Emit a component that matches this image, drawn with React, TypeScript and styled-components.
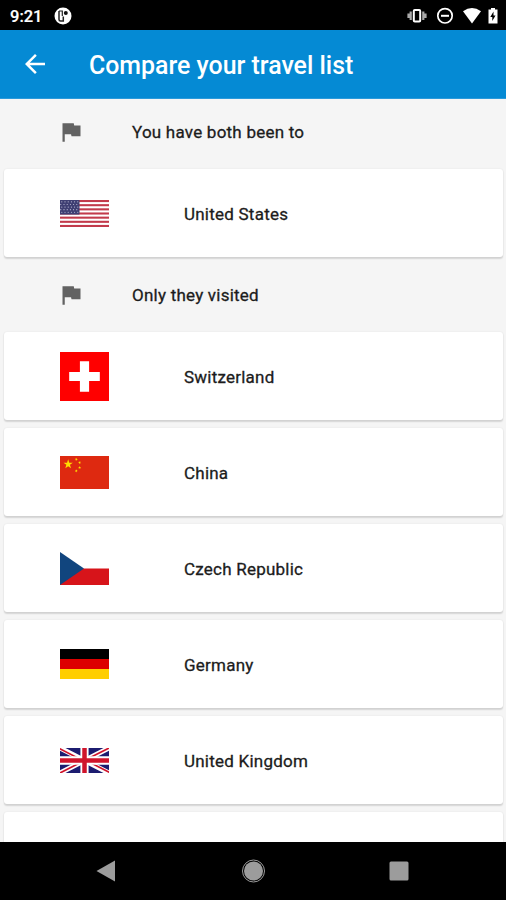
import React from "react";
import styled, { createGlobalStyle } from "styled-components";

const Global = createGlobalStyle`
  * { box-sizing: border-box; }
  body { margin: 0; background: #000; font-family: Roboto, sans-serif; }
`;

const Screen = styled.div`
  width: 506px;
  height: 900px;
  display: flex;
  flex-direction: column;
  overflow: hidden;
  background: #f5f5f5;
`;

const StatusBar = styled.header`
  flex: none;
  height: 30px;
  padding: 1px 5px 0 10px;
  display: flex;
  align-items: center;
  background: #000;
  color: #fff;
`;

const Clock = styled.span`
  width: 44px;
  padding-top: 1px;
  font-size: 16.5px;
  font-weight: 500;
  -webkit-text-stroke: 0.2px #fff;
`;

const StatusIcons = styled.div`
  margin-left: auto;
  display: flex;
  align-items: center;
`;

const Icon = styled.svg`
  display: block;
  flex: none;
`;

const AppBar = styled.div`
  flex: none;
  height: 69px;
  padding-left: 20px;
  display: flex;
  align-items: center;
  gap: 39px;
  background: #058ad4;
  border-bottom: 1px solid #2b9adb;
  color: #fff;
`;

const BackButton = styled.button`
  width: 30px;
  height: 30px;
  padding: 0;
  border: 0;
  background: none;
  color: inherit;
`;

const Title = styled.h1`
  margin: 3px 0 0;
  font-size: 24.9px;
  line-height: 32px;
  font-weight: 500;
  white-space: nowrap;
`;

const List = styled.main`
  flex: 1;
  min-height: 0;
  overflow: hidden;
`;

const SectionHeader = styled.h2<{ $height: number }>`
  margin: 0;
  height: ${(p) => p.$height}px;
  padding-left: 58px;
  display: flex;
  align-items: center;
  gap: 47px;
  font-size: 17px;
  font-weight: 400;
  letter-spacing: 0.23px;
  -webkit-text-stroke: 0.3px #1c1c1c;
  color: #1c1c1c;
`;

const FirstSectionHeader = styled(SectionHeader)`
  padding-bottom: 4px;
`;

const Cards = styled.div`
  display: flex;
  flex-direction: column;
  gap: 8px;
  padding: 0 3px 0 4px;
`;

const Card = styled.div`
  height: 88px;
  padding-left: 56px;
  display: flex;
  align-items: center;
  gap: 75px;
  border-radius: 3px;
  background: #fff;
  box-shadow: 0 1.5px 1.5px rgba(0, 0, 0, 0.13), 0 0 2px rgba(0, 0, 0, 0.08);
  font-size: 17px;
  letter-spacing: 0.23px;
  -webkit-text-stroke: 0.3px #1c1c1c;
  color: #1c1c1c;
`;

const CountryName = styled.span`
  padding-top: 2px;
`;

const NavBar = styled.nav`
  flex: none;
  height: 58px;
  padding: 0 94px 1px 93px;
  display: flex;
  align-items: center;
  justify-content: space-between;
  background: #000;
`;

const FlagGlyph = () => (
  <Icon width="27" height="26" viewBox="0 0 24 24" preserveAspectRatio="none" fill="#626262">
    <path d="M14.4 6 14 4H4v17h2v-7h5.6l.4 2h8V6z" />
  </Icon>
);

const FlagUS = () => (
  <Icon width="49" height="27" viewBox="0 0 49 26" preserveAspectRatio="none">
    <rect width="49" height="26" fill="#fff" />
    {[0, 4, 8, 12, 16, 20, 24].map((y) => (
      <rect key={y} y={y} width="49" height="2" fill="#c23a4b" />
    ))}
    <rect width="19.5" height="14" fill="#3f3f73" />
    {[1.5, 4, 6.5, 9, 11.5].map((y, r) =>
      [1.8, 5, 8.2, 11.4, 14.6, 17.8].map((x) => (
        <circle key={`${x}-${y}`} cx={x - (r % 2 ? 1 : 0)} cy={y + 0.3} r="0.55" fill="#c4c4dc" />
      ))
    )}
  </Icon>
);

const FlagCH = () => (
  <Icon width="49" height="49" viewBox="0 0 32 32">
    <rect width="32" height="32" fill="#f00" />
    <path fill="#fff" d="M13 6h6v7h7v6h-7v7h-6v-7H6v-6h7z" />
  </Icon>
);

const STAR = "M0-1 .225-.309 .951-.309 .363.118 .588.809 0 .382-.588.809-.363.118-.951-.309-.225-.309z";

const FlagCN = () => (
  <Icon width="49" height="33" viewBox="0 0 30 20" preserveAspectRatio="none">
    <rect width="30" height="20" fill="#de2910" />
    <g fill="#ffde00">
      <path d={STAR} transform="translate(5 5) scale(3)" />
      <path d={STAR} transform="translate(10 2) rotate(-121)" />
      <path d={STAR} transform="translate(12 4) rotate(-98)" />
      <path d={STAR} transform="translate(12 7) rotate(-74)" />
      <path d={STAR} transform="translate(10 9) rotate(-51)" />
    </g>
  </Icon>
);

const FlagCZ = () => (
  <Icon width="49" height="33" viewBox="0 0 48 32" preserveAspectRatio="none">
    <rect width="48" height="32" fill="#fff" />
    <rect y="16" width="48" height="16" fill="#d7141a" />
    <path fill="#11457e" d="M0 0 23.5 16 0 32z" />
  </Icon>
);

const FlagDE = () => (
  <Icon width="49" height="30" viewBox="0 0 5 3" preserveAspectRatio="none">
    <rect width="5" height="3" fill="#000" />
    <rect y="1" width="5" height="2" fill="#d00" />
    <rect y="2" width="5" height="1" fill="#ffce00" />
  </Icon>
);

const FlagUK = () => (
  <Icon width="49" height="25" viewBox="0 0 60 30" preserveAspectRatio="none">
    <rect width="60" height="30" fill="#1c1c70" />
    <path d="M0 0 60 30M60 0 0 30" stroke="#fff" strokeWidth="6" />
    <path
      d="M-1 .5 29 15.5M31 14.5 61-.5M31 14.5 61 29.5M-1 30.5 29 15.5"
      stroke="#cf142b"
      strokeWidth="2"
    />
    <path d="M30 0V30M0 15H60" stroke="#fff" strokeWidth="10" />
    <path d="M30 0V30M0 15H60" stroke="#cf142b" strokeWidth="5.5" />
  </Icon>
);

const theyVisited = [
  { name: "Switzerland", Flag: FlagCH },
  { name: "China", Flag: FlagCN },
  { name: "Czech Republic", Flag: FlagCZ },
  { name: "Germany", Flag: FlagDE },
  { name: "United Kingdom", Flag: FlagUK },
];

export default function App() {
  return (
    <>
      <Global />
      <Screen>
        <StatusBar>
          <Clock>9:21</Clock>
          <Icon width="18" height="18" viewBox="0 0 18 18">
            <circle cx="9" cy="9" r="8.5" fill="#fff" />
            <path d="M5 4v8.500q0 1.500 1.500 1.500H9.300V9.500" fill="none" stroke="#222" strokeWidth="1.5" />
            <path d="M5 4h3.300v5" fill="none" stroke="#222" strokeWidth="1.2" />
            <circle cx="11.800" cy="5.900" r="2" fill="#111" />
          </Icon>
          <StatusIcons>
            <Icon width="20" height="20" viewBox="0 0 20 20">
              <path d="M3.700 5.500v8.500M16.300 5.500v8.500M1.500 7.500v4.500M18.500 7.500v4.500" stroke="#aaa" strokeWidth="2.200" />
              <rect x="6.800" y="4" width="6.400" height="11.500" rx="1" fill="#000" stroke="#fff" strokeWidth="2" />
            </Icon>
            <Icon width="36" height="20" viewBox="0 0 36 20">
              <circle cx="18" cy="9.800" r="7.200" fill="none" stroke="#fff" strokeWidth="1.700" />
              <path d="M14 9.800h8" stroke="#fff" strokeWidth="2" />
            </Icon>
            <Icon width="18" height="20" viewBox="0 0 18 20">
              <path d="M0 5.200Q9-1 18 5.200L9 17.500z" fill="#fff" />
            </Icon>
            <Icon width="20" height="20" viewBox="0 0 20 20">
              <path d="M7.500 3.500h2.500V2h4v1.500h2.500v14h-9z" fill="#fff" />
              <path d="M12.500 5.500 9.300 11h2v4l3.200-5.500h-2z" fill="#000" />
            </Icon>
          </StatusIcons>
        </StatusBar>

        <AppBar>
          <BackButton aria-label="Back">
            <Icon width="30" height="30" viewBox="0 0 24 24" fill="currentColor">
              <path d="M20 11H7.830l5.590-5.590L12 4l-8 8 8 8 1.410-1.410L7.830 13H20z" />
            </Icon>
          </BackButton>
          <Title>Compare your travel list</Title>
        </AppBar>

        <List>
          <FirstSectionHeader $height={70}>
            <FlagGlyph />
            You have both been to
          </FirstSectionHeader>
          <Cards>
            <Card>
              <FlagUS />
              <CountryName>United States</CountryName>
            </Card>
          </Cards>
          <SectionHeader $height={75}>
            <FlagGlyph />
            Only they visited
          </SectionHeader>
          <Cards>
            {theyVisited.map(({ name, Flag }) => (
              <Card key={name}>
                <Flag />
                <CountryName>{name}</CountryName>
              </Card>
            ))}
            <Card />
          </Cards>
        </List>

        <NavBar>
          <Icon width="26" height="26" viewBox="0 0 26 26">
            <path d="M3.500 13 22 2.500v21z" fill="#9c9c9c" />
          </Icon>
          <Icon width="26" height="26" viewBox="0 0 26 26">
            <circle cx="13.500" cy="13" r="11" fill="none" stroke="#9c9c9c" strokeWidth="1" />
            <circle cx="13.500" cy="13" r="9.500" fill="#9c9c9c" />
          </Icon>
          <Icon width="26" height="26" viewBox="0 0 26 26">
            <rect x="3.500" y="3.500" width="19" height="19" rx="1.500" fill="#9c9c9c" />
          </Icon>
        </NavBar>
      </Screen>
    </>
  );
}
